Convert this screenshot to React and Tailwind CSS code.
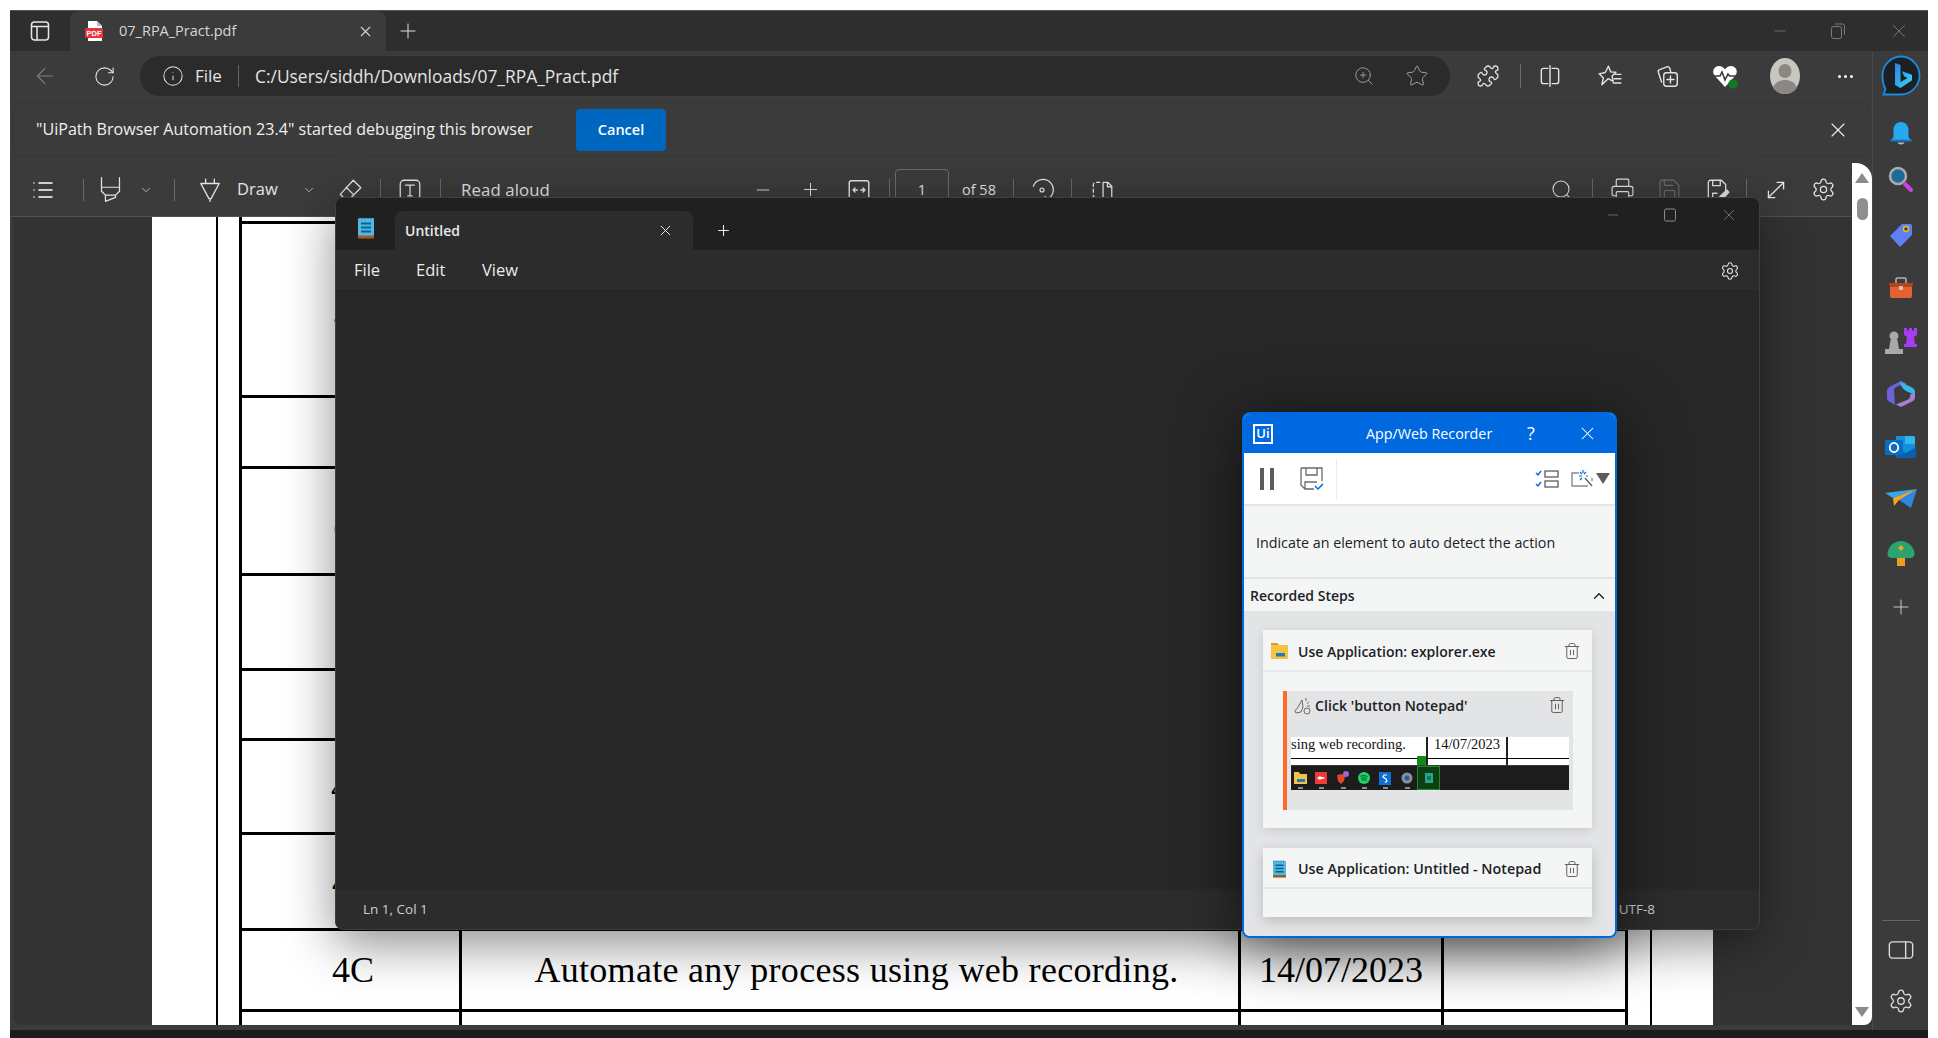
import React from 'react';
import {
  ArrowLeft, RotateCw, Info, ZoomIn, Star, Puzzle, X, Plus, Minus, List, ChevronDown, ChevronUp,
  Search, Printer, Save, MoveDiagonal, Settings, Trash2,
} from 'lucide-react';

// generic 24x24 outline icon
const Svg = ({ size = 24, sw = 1.2, className = '', children }) => (
  <svg width={size} height={size} viewBox="0 0 24 24" fill="none" stroke="currentColor" strokeWidth={sw} strokeLinecap="round" strokeLinejoin="round" className={className}>
    {children}
  </svg>
);

const Box = ({ className = '', children }) => (
  <div className={`flex items-center justify-center shrink-0 ${className}`}>{children}</div>
);

const Sep = ({ className = '' }) => <div className={`w-px h-[22px] bg-[#6a6a6a] shrink-0 ${className}`} />;

const PanelIcon = () => (
  <Svg size={24} sw={1.5}>
    <rect x="3.5" y="3" width="17" height="18" rx="3" />
    <path d="M3.5 7.5h17M9 7.5V21" />
  </Svg>
);

const PdfIcon = () => (
  <svg width="20" height="22" viewBox="0 0 20 22">
    <path d="M4 1h9l5 5v15H4z" fill="#fff" />
    <path d="M13 1l5 5h-5z" fill="#bbb" />
    <rect x="1" y="8" width="18" height="10" rx="1.5" fill="#e8343a" />
    <text x="10" y="16" textAnchor="middle" fontSize="7.5" fontWeight="700" fill="#fff" fontFamily="Liberation Sans">PDF</text>
  </svg>
);

const SplitIcon = () => (
  <Svg size={26} sw={1.3}>
    <path d="M10 5H6a2 2 0 0 0-2 2v10a2 2 0 0 0 2 2h4M14 5h4a2 2 0 0 1 2 2v10a2 2 0 0 1-2 2h-4M12 2.5v19" />
  </Svg>
);

const FavIcon = () => (
  <Svg size={26} sw={1.3}>
    <path d="M10.5 3l2.2 5.2 4.8.4-3.6 3.4 1 5-4.4-2.6L4.5 20l1.4-6.2L2 10l5.6-1.2z" />
    <path d="M17 10.5h5M16 14.5h6M15 18.5h7" />
  </Svg>
);

const CollectionsIcon = () => (
  <Svg size={26} sw={1.3}>
    <path d="M7 17.5 4 8.5a2 2 0 0 1 1.3-2.4l6.5-2.6a2 2 0 0 1 2.6 1.2l1 3" />
    <rect x="9" y="9" width="12.5" height="12.5" rx="2.5" />
    <path d="M15.2 12v6.5M12 15.2h6.5" />
  </Svg>
);

const HeartIcon = () => (
  <svg width="28" height="28" viewBox="0 0 28 28">
    <path d="M14 25 3.5 13.5C.5 9.5 3 4 8 4c2.6 0 4.6 1.4 6 3.4C15.4 5.4 17.4 4 20 4c5 0 7.500 5.500 4.500 9.500z" fill="#fff" />
    <path d="M2 14h7l2-4 3 8 3-6 1.500 2H26" fill="none" stroke="#3b3b3b" strokeWidth="1.600" />
    <circle cx="22" cy="22" r="4.700" fill="#127a23" />
  </svg>
);

const Avatar = () => (
  <svg width="30" height="36" viewBox="0 0 30 36">
    <ellipse cx="15" cy="18" rx="15" ry="18" fill="#c9c6c2" />
    <ellipse cx="15" cy="13" rx="6.500" ry="7" fill="#8b8783" />
    <path d="M3 30c2-6 7-8 12-8s10 2 12 8c-3 4-7.500 6-12 6s-9-2-12-6z" fill="#8b8783" />
  </svg>
);

const BingIcon = () => (
  <svg width="40" height="42" viewBox="0 0 40 42">
    <defs>
      <linearGradient id="bingb" x1="0" y1="0" x2="1" y2="1">
        <stop offset="0" stopColor="#2f7fe8" />
        <stop offset="1" stopColor="#38d6f2" />
      </linearGradient>
    </defs>
    <path d="M20 1.500c10 0 18.500 8.500 18.500 19s-8.500 19-18.500 19H2.500l2-5.500C2.500 30.500 1.500 25.500 1.500 20.500c0-10.500 8.500-19 18.500-19z" fill="#1c1f24" stroke="#1b8be0" strokeWidth="1.800" />
    <path d="M14 8l5.500 2v17l7-4-3.500-1.700-2-5 10 3.500v5.500L19.500 33 14 30z" fill="url(#bingb)" />
  </svg>
);

const BellIcon = () => (
  <svg width="24" height="26" viewBox="0 0 24 26">
    <path d="M12 1c5 0 7.500 4 7.500 8v7l3 4H1.500l3-4V9c0-4 2.500-8 7.500-8z" fill="#26a9f0" />
    <rect x="1.500" y="18.500" width="21" height="2" fill="#1578d6" />
    <path d="M8.500 21.500h7c-.5 2.500-6.500 2.500-7 0z" fill="#b9b9b9" />
  </svg>
);

const MagnifierIcon = () => (
  <svg width="26" height="28" viewBox="0 0 26 28">
    <circle cx="10" cy="10" r="8" fill="#1f6a96" stroke="#a9adb0" strokeWidth="2.500" />
    <path d="M17 18l6 6" stroke="#c844e0" strokeWidth="4" strokeLinecap="round" />
  </svg>
);

const TagIcon = () => (
  <svg width="24" height="26" viewBox="0 0 24 26">
    <path d="M13 2h8a2 2 0 0 1 2 2v9L11 25 1 14z" fill="#5f7ff5" />
    <circle cx="17" cy="7" r="2.500" fill="#38405f" stroke="#f2c400" strokeWidth="1.400" />
  </svg>
);

const ToolboxIcon = () => (
  <svg width="26" height="24" viewBox="0 0 26 24">
    <path d="M8 7V3.500A1.500 1.500 0 0 1 9.500 2h7A1.500 1.500 0 0 1 18 3.500V7" fill="none" stroke="#b0b0b0" strokeWidth="1.600" />
    <path d="M1 7h24l-1 5H2z" fill="#b8421c" />
    <path d="M2 11h22v9a2 2 0 0 1-2 2H4a2 2 0 0 1-2-2z" fill="#e4622e" />
    <rect x="11" y="10" width="4" height="4" rx="1" fill="#c9c9c9" />
  </svg>
);

const ChessIcon = () => (
  <svg width="36" height="30" viewBox="0 0 36 30">
    <circle cx="11" cy="9" r="4.500" fill="#a9a9a9" />
    <path d="M7.500 13h7l1.500 9h4v5H2v-5h4z" fill="#a9a9a9" />
    <path d="M21 1h3v2.500h2V1h3v2.500h2V1h3v7l-3 2 1 7h2v3H21v-3h2l1-7-3-2z" fill="#a63df0" />
  </svg>
);

const M365Icon = () => (
  <svg width="30" height="28" viewBox="0 0 30 28">
    <path d="M15 1 4 6.500C2 7.500 1 9.500 1 11v7c0 2 1 3 3 4l5 3-1-15c0-2 2-3 4-4l9-2z" fill="#6d62d8" />
    <path d="M14 1.500 25 7c3 1.500 4 3 4 5v3l-9-4c-2-1-5-4-6-9.500z" fill="#35b8ec" />
    <path d="M29 13v4c0 2-1 3.500-3 4.500L15 27l-5-2.500 12-5c2-1 2.500-3 2-5z" fill="#a77fd8" />
  </svg>
);

const OutlookIcon = () => (
  <svg width="32" height="24" viewBox="0 0 32 24">
    <path d="M11 1h17a2 2 0 0 1 2 2v19H11z" fill="#1490df" />
    <path d="M20 1h8a2 2 0 0 1 2 2v6H20z" fill="#33b5f0" />
    <path d="M11 12l10 6 10-6v10a1 1 0 0 1-1 1H11z" fill="#0a5fb0" />
    <rect x="0" y="5" width="18" height="15" rx="1.500" fill="#0b6cc4" />
    <ellipse cx="9" cy="12.500" rx="4.200" ry="4.600" fill="none" stroke="#fff" strokeWidth="1.800" />
  </svg>
);

const SendIcon = () => (
  <svg width="34" height="20" viewBox="0 0 34 20">
    <path d="M1 4 33 0 9 9z" fill="#3aa6f0" />
    <path d="M9 9 33 0 27 19 15 11z" fill="#2f86e0" />
    <path d="M9 9l24-9-18 11-5 6z" fill="#f0a820" />
  </svg>
);

const TreeIcon = () => (
  <svg width="28" height="26" viewBox="0 0 28 26">
    <path d="M14 0c8 0 13.500 7 13.500 13 0 3-2.500 4-5 4H5.500C3 17 .5 16 .5 13 .5 7 6 0 14 0z" fill="#2ba36f" />
    <path d="M14 4l3 3-3 3-3-3z" fill="#e9a628" />
    <path d="M10 17h8v8h-8z" fill="#e9a01c" />
  </svg>
);

const PanelRightIcon = () => (
  <Svg size={28} sw={1.2}>
    <rect x="2" y="5" width="20" height="14" rx="3" />
    <path d="M16 5v14" />
  </Svg>
);

const NotepadIcon = ({ w = 16, h = 22 }) => (
  <svg width={w} height={h} viewBox="0 0 16 22">
    <rect x="0" y="1" width="16" height="20" rx="1" fill="#4fb8e3" />
    <rect x="0" y="18.500" width="16" height="3" fill="#a9591f" />
    <path d="M1 .5v1.500M4 .5v1.500M7 .5v1.500M10 .5v1.500M13 .5v1.500" stroke="#16506e" strokeWidth="1" />
    <path d="M3 6.500h10M3 10.500h10M3 14.500h10" stroke="#0f5f88" strokeWidth="1.800" />
  </svg>
);

const TableRow = ({ h, first, middle, date }) => (
  <div className={`grid grid-cols-[220px_779px_203px_184px] border-b-[3px] border-black shrink-0 ${h}`}>
    <div className="border-r-[3px] border-black flex items-center justify-center pl-[5px]">{first}</div>
    <div className="border-r-[3px] border-black flex items-center justify-center tracking-[0.3px] pl-[13px]">{middle}</div>
    <div className="border-r-[3px] border-black flex items-center justify-center">{date}</div>
    <div className="border-r-[3px] border-black" />
  </div>
);

const Peek = ({ children }) => <span className="ml-[4px]">{children}</span>;

const PdfPage = () => (
  <div className="ml-[139px] w-[1561px] h-full bg-white overflow-hidden">
    <div className="ml-[64px] w-[1436px] h-full border-x-2 border-black pl-[21px] pr-[22px] font-['Liberation_Serif',serif] text-[36px] leading-none text-black">
      <div className="flex flex-col h-full border-l-[3px] border-black">
        <TableRow h="h-[7px]" />
        <TableRow h="h-[174px]" first={<Peek>2A</Peek>} />
        <TableRow h="h-[71px]" />
        <TableRow h="h-[107px]" first={<Peek>3A</Peek>} />
        <TableRow h="h-[95px]" first={<Peek>3B</Peek>} />
        <TableRow h="h-[70px]" />
        <TableRow h="h-[94px]" first="4A" />
        <TableRow h="h-[96px]" first="4B" />
        <TableRow h="h-[81px]" first="4C" middle="Automate any process using web recording." date="14/07/2023" />
        <TableRow h="h-[30px]" />
      </div>
    </div>
  </div>
);

const TabStrip = () => (
  <div className="h-[41px] shrink-0 flex bg-[#2e2e2e] border-t border-[#555] text-[#d6d6d6]">
    <Box className="w-[60px] text-[#e6e6e6]"><PanelIcon /></Box>
    <div className="w-[316px] bg-[#3b3b3b] rounded-t-lg flex items-center">
      <Box className="w-[48px]"><PdfIcon /></Box>
      <span className="text-[14.500px] ml-[1px]">07_RPA_Pract.pdf</span>
      <X size={17} strokeWidth={1.500} className="ml-auto mr-[12px]" />
    </div>
    <Box className="w-[44px]"><Plus size={24} strokeWidth={1} className="text-[#e0e0e0]" /></Box>
    <div className="ml-auto flex items-center text-[#7b7b7b]">
      <Minus size={18} strokeWidth={1} className="mr-[-2px]" />
      <svg width="18" height="18" viewBox="0 0 18 18" fill="none" stroke="currentColor" className="ml-[42px]">
        <rect x="2.500" y="4.500" width="10" height="12" rx="2" />
        <path d="M6 2h7.500a2 2 0 0 1 2 2v9" />
      </svg>
      <X size={22} strokeWidth={1} className="ml-[41px] mr-[18px]" />
    </div>
  </div>
);

const AddressRow = () => (
  <div className="h-[51px] shrink-0 pt-[5px] flex items-start text-[#e4e4e4]">
    <Box className="w-[30px] h-[40px] ml-[20px] text-[#808080]"><ArrowLeft size={26} strokeWidth={1} /></Box>
    <Box className="w-[30px] h-[40px] ml-[29px]"><RotateCw size={23} strokeWidth={1.100} /></Box>
    <div className="ml-[21px] w-[1310px] h-[40px] rounded-full bg-[#2b2b2b] flex items-center pl-[22px] pr-[21px]">
      <Info size={22} strokeWidth={1.100} className="shrink-0" />
      <span className="ml-[11px] w-[28px] text-[17px] whitespace-nowrap">File</span>
      <div className="w-px h-[22px] bg-[#666] ml-[15px]" />
      <span className="ml-[16px] text-[17.400px]">C:/Users/siddh/Downloads/07_RPA_Pract.pdf</span>
      <Box className="ml-auto w-[24px] text-[#a0a0a0]"><ZoomIn size={22} strokeWidth={1} /></Box>
      <Box className="ml-[29px] w-[24px] text-[#a0a0a0]"><Star size={24} strokeWidth={1} /></Box>
    </div>
    <div className="flex items-center h-[40px]">
      <Box className="w-[28px] ml-[24px]"><Puzzle size={24} strokeWidth={1.300} /></Box>
      <div className="w-px h-[24px] bg-[#6a6a6a] ml-[18px]" />
      <Box className="w-[28px] ml-[15px]"><SplitIcon /></Box>
      <Box className="w-[28px] ml-[32px]"><FavIcon /></Box>
      <Box className="w-[28px] ml-[29px]"><CollectionsIcon /></Box>
      <Box className="w-[28px] ml-[30px]"><HeartIcon /></Box>
      <Box className="w-[30px] ml-[31px]"><Avatar /></Box>
      <Box className="w-[28px] ml-[31px] gap-[3px]">
        <span className="w-[3px] h-[3px] bg-white rounded-full" />
        <span className="w-[3px] h-[3px] bg-white rounded-full" />
        <span className="w-[3px] h-[3px] bg-white rounded-full" />
      </Box>
    </div>
  </div>
);

const InfoBar = () => (
  <div className="h-[55px] shrink-0 ml-[3px] w-[1857px] rounded-lg border border-[#363636] bg-[#3b3b3b] flex items-center pl-[22px] text-[#efefef]">
    <span className="w-[497px] text-[16.100px] whitespace-nowrap">"UiPath Browser Automation 23.4" started debugging this browser</span>
    <button className="ml-[43px] w-[90px] h-[42px] rounded-sm bg-[#0067c0] text-white text-[14.500px] font-semibold">Cancel</button>
    <X size={24} strokeWidth={1.100} className="ml-auto mr-[19px]" />
  </div>
);

const PdfToolbar = () => (
  <div className="h-[57px] shrink-0 flex items-center border-b border-[#505050] text-[#e4e4e4] pt-[3px]">
    <div className="flex items-center w-[690px] pl-[13px]">
      <Box className="w-[40px] text-white"><List size={24} strokeWidth={1.500} /></Box>
      <Sep className="ml-[20px]" />
      <Box className="w-[30px] ml-[11px]">
        <Svg size={27} sw={1.100}><path d="M4 1.500v8.500h16V1.500M4 10v3.500L7.500 17h9l3.500-3.500V10M7.500 17v5.500l9-3.500v-2" /></Svg>
      </Box>
      <Box className="w-[16px] ml-[13px]"><ChevronDown size={14} strokeWidth={1.200} /></Box>
      <Sep className="ml-[20px]" />
      <Box className="w-[30px] ml-[20px]">
        <Svg size={26} sw={1.200}><path d="M8 2v4h8V2M3.500 6h17L13 20h-2zM12 20v2.500" /></Svg>
      </Box>
      <span className="ml-[12px] text-[16.500px] w-[41px]">Draw</span>
      <Box className="w-[16px] ml-[23px]"><ChevronDown size={14} strokeWidth={1.200} /></Box>
      <Box className="w-[30px] ml-[18px]">
        <Svg size={26} sw={1.200}><path d="M15 3l7 7-11 11H8l-5-5zM8.500 9.500l7 7" /></Svg>
      </Box>
      <Sep className="ml-[15px]" />
      <Box className="w-[30px] ml-[14px]">
        <Svg size={26} sw={1.200}><rect x="3" y="3" width="18" height="18" rx="3.500" /><path d="M8 7.500h8M12 7.500v10M10 17.500h4" /></Svg>
      </Box>
      <Sep className="ml-[15px]" />
      <span className="ml-[20px] text-[16.800px] whitespace-nowrap tracking-[0.1px]">Read aloud</span>
    </div>
    <div className="flex items-center">
      <Box className="w-[30px] ml-[48px]"><Minus size={20} strokeWidth={1.100} /></Box>
      <Box className="w-[30px] ml-[17px]"><Plus size={21} strokeWidth={1.100} /></Box>
      <Box className="w-[30px] ml-[19px]">
        <Svg size={26} sw={1.300}><rect x="3" y="3.500" width="18" height="17" rx="2" /><path d="M6.500 12h4M6.500 12l1.800-1.800M6.500 12l1.800 1.800M13.500 12h4M17.500 12l-1.800-1.800M17.500 12l-1.800 1.800" /></Svg>
      </Box>
      <Sep className="ml-[15px]" />
      <div className="ml-[5px] w-[54px] h-[42px] rounded-sm border border-[#6c6c6c] flex items-center justify-center text-[14.500px]">1</div>
      <span className="ml-[13px] w-[35px] text-[14.500px] whitespace-nowrap">of 58</span>
      <Sep className="ml-[16px]" />
      <Box className="w-[30px] ml-[13px]">
        <Svg size={26} sw={1.200}><path d="M4 8.500A9.500 9.500 0 1 1 15 21" /><circle cx="12" cy="12" r="1.800" /><path d="M15 18v3.500" /></Svg>
      </Box>
      <Sep className="ml-[14px]" />
      <Box className="w-[30px] ml-[15px]">
        <Svg size={26} sw={1.200}><path d="M10 5H6a2 2 0 0 0-2 2v10a2 2 0 0 0 2 2h4" strokeDasharray="3 2.500" /><path d="M13 5h4.500L21 8.500V19h-8zM17 5v4h4" /></Svg>
      </Box>
    </div>
    <div className="ml-auto flex items-center pr-[14px]">
      <Box className="w-[30px]"><Search size={24} strokeWidth={1.100} /></Box>
      <Sep className="ml-[15px]" />
      <Box className="w-[30px] ml-[14px]"><Printer size={25} strokeWidth={1.100} /></Box>
      <Box className="w-[30px] ml-[17px] text-[#6e6e6e]"><Save size={25} strokeWidth={1.100} /></Box>
      <Box className="w-[30px] ml-[18px]">
        <Svg size={26} sw={1.200}><path d="M12 21H6a2 2 0 0 1-2-2V5a2 2 0 0 1 2-2h10l4 4v5M8 3v5h7V3M8 21v-6h4" /><path d="M14 21l.7-3L21 12l2 2-6 6.500z" fill="currentColor" /></Svg>
      </Box>
      <Sep className="ml-[14px]" />
      <Box className="w-[30px] ml-[14px]"><MoveDiagonal size={26} strokeWidth={1.200} /></Box>
      <Box className="w-[30px] ml-[17px]"><Settings size={25} strokeWidth={1.200} /></Box>
    </div>
  </div>
);

const Scrollbar = () => (
  <div className="w-[20px] shrink-0 mt-[3px] mb-[5px] bg-white rounded-tr-2xl rounded-br-lg flex flex-col items-center relative">
    <div className="mt-[10px] w-0 h-0 border-x-[7px] border-x-transparent border-b-[10px] border-b-[#8a8a8a]" />
    <div className="mt-[15px] w-[11px] h-[22px] rounded-full bg-[#8f8f8f]" />
    <div className="mt-auto mb-[8px] w-0 h-0 border-x-[7px] border-x-transparent border-t-[10px] border-t-[#8a8a8a]" />
  </div>
);

const Sidebar = () => (
  <div className="w-[56px] shrink-0 bg-[#3b3b3b] border-l border-[#4a4a4a] flex flex-col items-center text-[#dcdcdc]">
    <Box className="mt-[4px] h-[42px]"><BingIcon /></Box>
    <Box className="h-[26px] mt-[24px]"><BellIcon /></Box>
    <Box className="h-[28px] mt-[19px]"><MagnifierIcon /></Box>
    <Box className="h-[26px] mt-[28px]"><TagIcon /></Box>
    <Box className="h-[24px] mt-[28px]"><ToolboxIcon /></Box>
    <Box className="h-[30px] mt-[27px]"><ChessIcon /></Box>
    <Box className="h-[28px] mt-[23px]"><M365Icon /></Box>
    <Box className="h-[24px] mt-[27px]"><OutlookIcon /></Box>
    <Box className="h-[20px] mt-[30px]"><SendIcon /></Box>
    <Box className="h-[26px] mt-[32px]"><TreeIcon /></Box>
    <Box className="h-[24px] mt-[28px] text-[#c8c8c8]"><Plus size={24} strokeWidth={1} /></Box>
    <div className="mt-auto w-[38px] h-px bg-[#666]" />
    <Box className="h-[28px] mt-[15px]"><PanelRightIcon /></Box>
    <Box className="h-[28px] mt-[23px] mb-[15px]"><Settings size={26} strokeWidth={1.200} /></Box>
  </div>
);

const NotepadWindow = () => (
  <div className="absolute left-[335px] top-[197px] w-[1425px] h-[733px] rounded-lg border border-[#3f3f3f] bg-[#272727] flex flex-col overflow-hidden shadow-[0_14px_50px_rgba(0,0,0,0.45)] text-[#eaeaea]">
    <div className="h-[52px] shrink-0 bg-[#202020] flex items-end">
      <Box className="w-[59px] h-full pt-[8px]"><NotepadIcon /></Box>
      <div className="w-[298px] h-[39px] bg-[#2c2c2c] rounded-t-lg flex items-center pl-[10px] text-[14px] font-semibold">
        Untitled
        <X size={17} strokeWidth={1.400} className="ml-auto mr-[19px]" />
      </div>
      <Box className="w-[60px] h-[39px]"><Plus size={17} strokeWidth={1.500} /></Box>
      <div className="ml-auto self-start mt-[8px] flex items-center text-[#8a8a8a]">
        <Minus size={16} strokeWidth={1} />
        <svg width="14" height="14" viewBox="0 0 14 14" fill="none" stroke="currentColor" className="ml-[42px]"><rect x="1.500" y="1" width="11" height="12" rx="1.500" /></svg>
        <X size={18} strokeWidth={1} className="ml-[43px] mr-[21px]" />
      </div>
    </div>
    <div className="h-[41px] shrink-0 bg-[#2c2c2c] border-b border-[#252525] flex items-center text-[16.500px] pl-[18px] pt-[1px]">
      <span className="w-[27px]">File</span>
      <span className="ml-[35px] w-[29px]">Edit</span>
      <span className="ml-[37px]">View</span>
      <Settings size={20} strokeWidth={1.300} className="ml-auto mr-[19px]" />
    </div>
    <div className="flex-1 bg-[#272727]" />
    <div className="h-[40px] shrink-0 bg-[#2c2c2c] flex items-center justify-between pl-[27px] pr-[104px] pt-[1px] text-[13.500px] text-[#cfcfcf]">
      <span>Ln 1, Col 1</span>
      <span>UTF-8</span>
    </div>
  </div>
);

const TrashIcon = () => <Trash2 size={18} strokeWidth={1.200} className="text-[#555]" />;

const ThumbIcon = ({ children, className = '' }) => (
  <div className={`relative h-full flex flex-col items-center justify-center shrink-0 ${className}`}>
    {children}
    <div className="absolute bottom-[1px] w-[5px] h-[2px] bg-[#8c8c8c]" />
  </div>
);

const RecordingThumb = () => (
  <div className="ml-[4px] w-[278px] h-[53px] flex flex-col overflow-hidden relative">
    <div className="h-[28px] shrink-0 bg-white relative flex font-['Liberation_Serif',serif] text-[14.500px] leading-none text-[#111]">
      <div className="w-[137px] h-full border-r-2 border-[#222] overflow-hidden whitespace-nowrap">sing web recording.</div>
      <div className="w-[80px] h-full border-r-2 border-[#222] pl-[6px]">14/07/2023</div>
      <div className="absolute left-0 right-0 top-[21px] h-px bg-black" />
    </div>
    <div className="h-[25px] shrink-0 bg-[#1c1c1c] border-t border-[#3a3a3a] flex items-center pl-[2px]">
      <ThumbIcon className="w-[14px]">
        <svg width="13" height="12" viewBox="0 0 13 12"><path d="M0 0h5l1 2h7v10H0z" fill="#f5c242" /><rect x="3" y="7" width="8" height="3" fill="#1e79c8" /></svg>
      </ThumbIcon>
      <ThumbIcon className="w-[12px] ml-[8px]">
        <svg width="12" height="12" viewBox="0 0 12 12"><rect width="12" height="12" fill="#ef3b36" /><path d="M2 6l3-2 1 1h2l2 1-2 1H6L5 8z" fill="#fff" /></svg>
      </ThumbIcon>
      <ThumbIcon className="w-[13px] ml-[10px]">
        <svg width="13" height="14" viewBox="0 0 13 14"><path d="M0 4l5-1 3 2-1 5-3 3-3-3z" fill="#e8442a" /><circle cx="9" cy="3" r="3" fill="#9a66d8" /></svg>
      </ThumbIcon>
      <ThumbIcon className="w-[12px] ml-[8px]">
        <svg width="12" height="12" viewBox="0 0 12 12"><circle cx="6" cy="6" r="6" fill="#1ed760" /><path d="M2.500 4.200c2.500-.8 5-.6 7 .4M3 6.200c2-.6 4-.5 6 .4M3.500 8c1.600-.4 3.200-.4 5 .4" stroke="#143" strokeWidth="1" fill="none" /></svg>
      </ThumbIcon>
      <ThumbIcon className="w-[12px] ml-[9px]">
        <svg width="12" height="13" viewBox="0 0 12 13"><rect width="12" height="13" fill="#0f6fd8" /><path d="M8 3H5L4 5l3 2 1 2-2 1.500" stroke="#fff" fill="none" strokeWidth="1.200" /></svg>
      </ThumbIcon>
      <ThumbIcon className="w-[12px] ml-[10px]">
        <svg width="12" height="12" viewBox="0 0 12 12"><circle cx="6" cy="6" r="5.500" fill="#8b8f95" /><circle cx="6" cy="6" r="2.500" fill="#1c5fb0" /></svg>
      </ThumbIcon>
      <div className="ml-[4px] w-[23px] h-full bg-[#0e3f12] border border-[#1f8a22] flex items-center justify-center">
        <svg width="8" height="10" viewBox="0 0 8 10"><rect width="8" height="10" fill="#2aa58a" /><path d="M2 4h4M2 6h4" stroke="#10463a" strokeWidth="1" /></svg>
      </div>
    </div>
    <div className="absolute left-[126px] top-[19px] w-[9px] h-[9px] bg-[#128a14] rounded-[1px]" />
  </div>
);

const RecorderWindow = () => (
  <div className="absolute left-[1242px] top-[412px] w-[375px] h-[526px] rounded-lg border-2 border-[#0069e0] bg-[#e3e4e6] flex flex-col overflow-hidden shadow-[0_10px_60px_rgba(0,0,0,0.6)] text-[14px] text-[#1c2126]">
    <div className="h-[39px] shrink-0 bg-[#0069e0] flex items-center text-white relative">
      <div className="ml-[9px] w-[20px] h-[20px] border-2 border-white flex items-center justify-center text-[13px] font-semibold leading-none">Ui</div>
      <span className="ml-[93px] w-[127px] text-[14.300px] whitespace-nowrap">App/Web Recorder</span>
      <span className="ml-[34px] text-[18px]">?</span>
      <X size={21} strokeWidth={1.200} className="ml-[42px]" />
    </div>
    <div className="h-[53px] shrink-0 bg-white border-b-2 border-[#e3e4e6] flex items-center">
      <div className="ml-[16px] flex gap-[6px]">
        <div className="w-[4px] h-[22px] bg-[#5c5c5c]" />
        <div className="w-[4px] h-[22px] bg-[#5c5c5c]" />
      </div>
      <svg width="24" height="24" viewBox="0 0 24 24" fill="none" className="ml-[26px]">
        <path d="M1 1h21v13M1 1v17l4 4h9M6 1v7h11V1M5 22v-7h12" stroke="#6a6a6a" strokeWidth="1.300" />
        <path d="M15 19l3 3 5-5" stroke="#0069e0" strokeWidth="1.500" />
      </svg>
      <div className="ml-[12px] w-px h-[40px] bg-[#eceded]" />
      <svg width="24" height="18" viewBox="0 0 24 18" fill="none" className="ml-[198px]">
        <path d="M1 3l2 2 3-4M1 14l2 2 3-4" stroke="#0069e0" strokeWidth="1.400" />
        <rect x="10" y="1" width="13" height="6" stroke="#5c5c5c" strokeWidth="1.300" />
        <rect x="10" y="11" width="13" height="6" stroke="#5c5c5c" strokeWidth="1.300" />
      </svg>
      <svg width="24" height="20" viewBox="0 0 24 20" fill="none" className="ml-[12px]">
        <path d="M8 4H1v13h16M21 9v3" stroke="#8a8a8a" strokeWidth="1.400" />
        <path d="M14 9l7 8" stroke="#5c5c5c" strokeWidth="1.400" />
        <path d="M12 1v3M8 7h3M17 7h-2M15 3l-2 2M9 3l2 2M9 11l2-2" stroke="#0069e0" strokeWidth="1.200" />
      </svg>
      <div className="ml-[1px] w-0 h-0 border-x-[7px] border-x-transparent border-t-[11px] border-t-[#5c5c5c]" />
    </div>
    <div className="h-[71px] shrink-0 bg-[#f4f6f6] flex items-center pl-[12px] pt-[2px] text-[14.300px]">Indicate an element to auto detect the action</div>
    <div className="h-[34px] shrink-0 border-t-2 border-[#e3e4e6] bg-[#f4f6f6] flex items-center justify-between pl-[6px] pr-[7px] pt-[1px] font-semibold text-[14px]">
      Recorded Steps
      <ChevronUp size={18} strokeWidth={1.800} />
    </div>
    <div className="flex-1 bg-[#e3e4e6] pl-[19px]">
      <div className="mt-[19px] w-[329px] h-[198px] bg-[#f4f6f6] shadow-[0_2px_10px_rgba(0,0,0,0.12)]">
        <div className="h-[42px] border-b-2 border-[#e6e7e8] flex items-center pl-[8px] pr-[11px] pt-[2px] font-semibold text-[14px]">
          <svg width="17" height="16" viewBox="0 0 17 16"><path d="M0 0h6l2 2h9v14H0z" fill="#f5c242" /><path d="M0 0h6l2 2H0z" fill="#d9a020" /><rect x="5" y="10" width="9" height="3.500" fill="#1e79c8" /></svg>
          <span className="ml-[10px]">Use Application: explorer.exe</span>
          <span className="ml-auto"><TrashIcon /></span>
        </div>
        <div className="mt-[19px] ml-[20px] w-[290px] h-[119px] bg-[#e3e4e6] border-l-4 border-[#ff6a2b]">
          <div className="h-[46px] flex items-start pt-[4px] pl-[7px] pr-[7px] font-semibold text-[14.200px]">
            <svg width="17" height="18" viewBox="0 0 17 18" fill="none" stroke="#6a6a6a" strokeWidth="1" className="mt-[2px]">
              <path d="M8 3l1 7-2 5-5 1-1-2 3-4 4-7zM12 1v3M15 5l-2 1.500M16 9h-3" />
              <circle cx="13" cy="14" r="3" />
            </svg>
            <span className="ml-[4px]">Click 'button Notepad'</span>
            <span className="ml-auto mt-[1px]"><TrashIcon /></span>
          </div>
          <RecordingThumb />
        </div>
      </div>
      <div className="mt-[20px] w-[329px] h-[69px] bg-[#f4f6f6] shadow-[0_4px_12px_rgba(0,0,0,0.18)]">
        <div className="h-[41px] border-b-2 border-[#e6e7e8] flex items-center pl-[10px] pr-[11px] pt-[2px] font-semibold text-[14.300px]">
          <NotepadIcon w={13} h={18} />
          <span className="ml-[12px] whitespace-nowrap">Use Application: Untitled - Notepad</span>
          <span className="ml-auto"><TrashIcon /></span>
        </div>
      </div>
    </div>
  </div>
);

export default function App() {
  return (
    <div className="relative w-[1938px] h-[1038px] overflow-hidden bg-white pt-[10px] pl-[10px] pr-[10px] font-['Open_Sans',sans-serif]">
      <div className="flex flex-col h-full">
        <TabStrip />
        <div className="h-[979px] shrink-0 flex">
          <div className="flex-1 min-w-0 flex flex-col bg-[#3b3b3b]">
            <AddressRow />
            <InfoBar />
            <div className="flex-1 min-h-0 flex mt-[3px]">
              <div className="flex-1 min-w-0 flex flex-col">
                <PdfToolbar />
                <div className="flex-1 min-h-0 pb-[5px]">
                  <div className="h-full ml-[3px] bg-[#333333] rounded-bl-lg">
                    <PdfPage />
                  </div>
                </div>
              </div>
              <Scrollbar />
            </div>
          </div>
          <Sidebar />
        </div>
        <div className="h-[8px] shrink-0 bg-[#1c1c1c]" />
      </div>
      <NotepadWindow />
      <RecorderWindow />
    </div>
  );
}
